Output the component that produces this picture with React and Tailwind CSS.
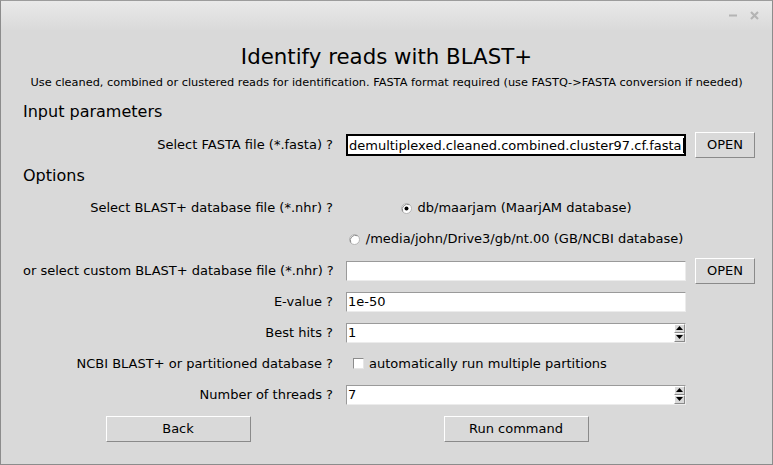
import React from "react";

const font = { fontFamily: '"DejaVu Sans", "Liberation Sans", sans-serif' };

function Button({ children, className = "" }) {
    return (
        <div
            className={`h-[26px] flex items-center justify-center bg-[#d9d9d9] border border-t-white border-l-white border-b-[#8a8a8a] border-r-[#8a8a8a] text-[13px] text-black ${className}`}
        >
            {children}
        </div>
    );
}

function Entry({ value = "", spin = false }) {
    return (
        <div className="relative w-[340px] h-[20px] bg-white border border-t-[#9a9a9a] border-l-[#9a9a9a] border-b-[#ececec] border-r-[#ececec] flex items-center pl-[1px] text-[13px] text-black leading-none">
            {value}
            {spin && (
                <div className="absolute right-0 top-0 h-full w-[11px] flex flex-col">
                    <SpinArrow up />
                    <SpinArrow />
                </div>
            )}
        </div>
    );
}

function SpinArrow({ up = false }) {
    return (
        <div className="flex-1 flex items-center justify-center bg-[#d9d9d9] border border-t-white border-l-white border-b-[#8a8a8a] border-r-[#8a8a8a]">
            <svg width="7" height="4" viewBox="0 0 7 4">
                {up ? <polygon points="0,4 3.5,0 7,4" fill="#000" /> : <polygon points="0,0 7,0 3.5,4" fill="#000" />}
            </svg>
        </div>
    );
}

function Radio({ checked = false, label }) {
    return (
        <div className="flex items-center gap-[6px] text-[13px] text-black">
            <svg width="11" height="11" viewBox="0 0 11 11">
                <circle cx="5.5" cy="5.5" r="5" fill="#ffffff" stroke="#b5b5b5" strokeWidth="1" />
                <path d="M1.8 8.5 A5 5 0 0 1 8.5 1.8" fill="none" stroke="#8a8a8a" strokeWidth="1" />
                {checked && <circle cx="5.5" cy="5.5" r="2" fill="#000" />}
            </svg>
            <span>{label}</span>
        </div>
    );
}

function Row({ label, children, right = null, h = "h-[31px]" }) {
    return (
        <div className={`flex items-center ${h}`}>
            <div className="w-[310px] text-right text-[13px] text-black whitespace-nowrap">{label}</div>
            <div className="ml-[13px] w-[340px] flex items-center">{children}</div>
            {right && <div className="ml-[9px]">{right}</div>}
        </div>
    );
}

export default function App() {
    return (
        <div style={font} className="w-[773px] h-[465px] bg-[#d9d9d9] border border-[#8c8c8c] border-t-[#9c9c9c] flex flex-col overflow-hidden">
            {/* title bar */}
            <div className="h-[29px] bg-gradient-to-b from-[#e9e9e9] to-[#dadada] flex items-center justify-end pr-[13px] gap-[13px] shrink-0">
                <svg width="8" height="3" viewBox="0 0 8 3">
                    <rect x="0" y="0.5" width="8" height="2" fill="#b4b4b4" />
                </svg>
                <svg width="9" height="9" viewBox="0 0 9 9">
                    <path d="M1 1 L8 8 M8 1 L1 8" stroke="#b4b4b4" strokeWidth="2.2" />
                </svg>
            </div>

            <div className="mt-[14px] h-[25px] leading-[25px] text-center text-[21.33px] text-black">Identify reads with BLAST+</div>
            <div className="mt-[6px] h-[14px] leading-[14px] text-center text-[11.33px] text-black whitespace-nowrap">
                Use cleaned, combined or clustered reads for identification. FASTA format required (use FASTQ-&gt;FASTA conversion if needed)
            </div>

            <div className="pl-[22px] flex flex-col">
                <div className="mt-[13px] h-[20px] leading-[20px] text-[16px] text-black">Input parameters</div>

                <div className="mt-[10px]">
                    <Row label="Select FASTA file (*.fasta) ?" h="h-[26px]" right={<Button className="w-[60px]">OPEN</Button>}>
                        <div className="w-[340px] h-[22px] bg-white border-2 border-black flex items-center pl-[1px] text-[13px] leading-none text-black whitespace-nowrap overflow-hidden">
                            demultiplexed.cleaned.combined.cluster97.cf.fasta
                            <span className="inline-block w-[2px] h-[15px] bg-black ml-[1px]" />
                        </div>
                    </Row>
                </div>

                <div className="mt-[8px] h-[20px] leading-[20px] text-[16px] text-black">Options</div>

                <div className="mt-[12px]">
                    <Row label="Select BLAST+ database file (*.nhr) ?" h="h-[20px]">
                        <div className="w-[352px] flex justify-center">
                            <Radio checked label="db/maarjam (MaarjAM database)" />
                        </div>
                    </Row>
                </div>
                <div className="mt-[11px]">
                    <Row label="" h="h-[20px]">
                        <div className="w-[352px] flex justify-center">
                            <Radio label="/media/john/Drive3/gb/nt.00 (GB/NCBI database)" />
                        </div>
                    </Row>
                </div>

                <div className="mt-[6px]">
                    <Row label="or select custom BLAST+ database file (*.nhr) ?" right={<Button className="w-[60px]">OPEN</Button>}>
                        <Entry />
                    </Row>
                    <Row label="E-value ?">
                        <Entry value="1e-50" />
                    </Row>
                    <Row label="Best hits ?">
                        <Entry value="1" spin />
                    </Row>
                    <Row label="NCBI BLAST+ or partitioned database ?">
                        <div className="ml-[7px] flex items-center gap-[5px] text-[13px] text-black">
                            <div className="w-[11px] h-[11px] bg-white border border-t-[#8c8c8c] border-l-[#8c8c8c] border-b-[#e6e6e6] border-r-[#e6e6e6]" />
                            <span>automatically run multiple partitions</span>
                        </div>
                    </Row>
                    <Row label="Number of threads ?">
                        <Entry value="7" spin />
                    </Row>
                </div>

                <div className="mt-[6px] flex">
                    <div className="w-[310px] flex justify-center">
                        <Button className="w-[145px]">Back</Button>
                    </div>
                    <div className="ml-[13px] w-[340px] flex justify-center">
                        <Button className="w-[145px]">Run command</Button>
                    </div>
                </div>
            </div>
        </div>
    );
}
